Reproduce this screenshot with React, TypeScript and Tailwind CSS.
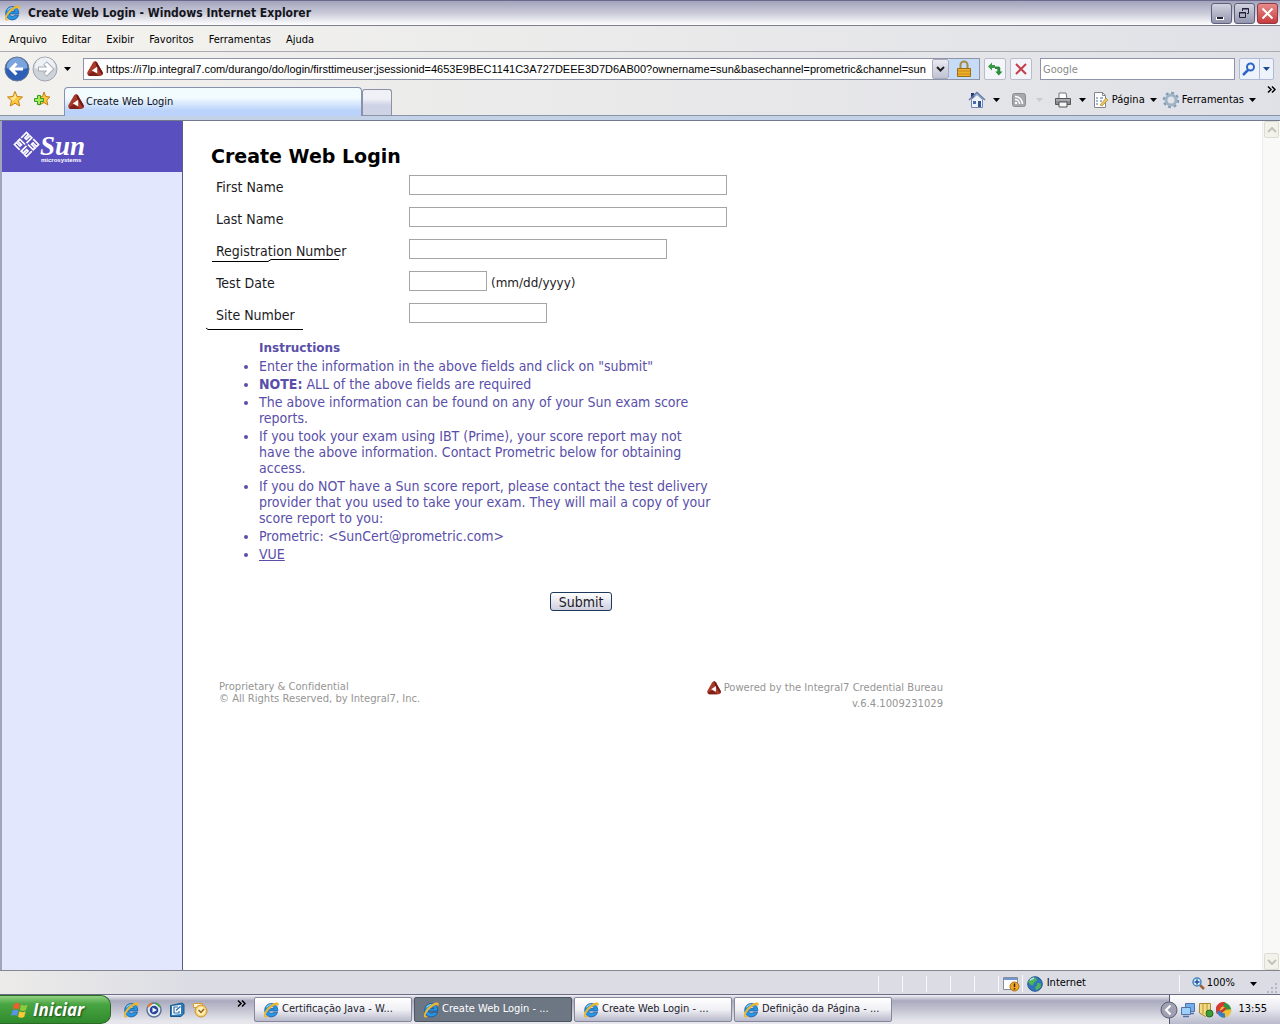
import { useState } from "react";

const ui = "font-['DejaVu_Sans_Condensed','DejaVu_Sans',sans-serif]";
const page = "font-['DejaVu_Sans',sans-serif]";
const pageText = "font-['DejaVu_Sans_Condensed','DejaVu_Sans',sans-serif] text-[14px]";

function IeIcon({ className = "h-4 w-4" }: { className?: string }) {
  return (
    <svg viewBox="0 0 16 16" className={`shrink-0 ${className}`} aria-hidden="true">
      <path d="M8.500 1.500c3.900 0 6.300 2.800 6.300 7.500H5.600c.2 1.500 1.300 2.200 2.900 2.200 1.200 0 2-.4 2.400-1h3.600c-.9 2.900-3.200 4.700-6.200 4.700-3.900 0-6.600-2.800-6.600-6.600 0-4 2.900-6.800 6.800-6.800zM5.700 6.600h5.300c-.2-1.300-1.200-2-2.600-2s-2.400.7-2.700 2z" fill="#2795e0" stroke="#0d4c98" strokeWidth=".7" />
      <path d="M3.500 5.200Q5 2.800 8 2.500" fill="none" stroke="#8fd4fa" strokeWidth="1.200" />
      <path d="M2 15.500c-2.700-1.200 0-7.500 4.300-11.200C10 1.200 14.700-.8 15.600 1.600c.3 1-.1 2.200-.8 3.400.1-2.200-1-2.700-3.500-1.400C7 6 2.400 11.200 2.700 13.600c.1 1 1.200.9 2.600.2-1.100 1.200-2.400 2.100-3.300 1.700z" fill="#efb72e" />
    </svg>
  );
}

function Integral7Icon({ className = "h-4 w-4" }: { className?: string }) {
  return (
    <svg viewBox="0 0 16 16" className={`shrink-0 ${className}`} aria-hidden="true">
      <path d="M6 1.500Q8-.8 10 1.500L15.500 11q1 3.200-2 4H2.500q-3-.8-2-4z" fill="#a83a2a" />
      <path d="M8 .3q1.300.2 2 1.200L15.500 11q.7 2-.3 3L9.300 5z" fill="#701914" />
      <path d="M1 13.500l5-3 6 4.500H2.500q-1.200-.4-1.500-1.500z" fill="#7f2119" />
      <path d="M10.200 5.800v6.400L4.800 9.500z" fill="#fff" />
    </svg>
  );
}

function Caret({ className = "text-black" }: { className?: string }) {
  return (
    <svg viewBox="0 0 7 4" className={`h-1 w-[7px] shrink-0 ${className}`} aria-hidden="true">
      <path d="M0 0h7L3.500 4z" fill="currentColor" />
    </svg>
  );
}

function Chevrons() {
  return <svg viewBox="0 0 9 7" className="h-[7px] w-[9px]" fill="none" stroke="#000" strokeWidth="1.500"><path d="M1 .5l3 3-3 3M5 .5l3 3-3 3" /></svg>;
}

function TitleBar() {
  const btn = "flex h-[21px] w-[21px] items-center justify-center rounded-[3px] border border-[#5d5f7c] bg-linear-to-b from-[#d3d4e0] to-[#9496ae]";
  return (
    <header className="flex h-[26px] items-center gap-2 border-y border-t-[#6c6a8c] border-b-[#7d7e90] bg-linear-to-b from-[#a3a4bc] via-[#c9cad8] to-white pl-1 pr-[2px]">
      <IeIcon />
      <h1 className="flex-1 text-[12px] font-bold text-[#15151c]">Create Web Login - Windows Internet Explorer</h1>
      <div className="flex gap-[2px]">
        <button aria-label="Minimizar" className={btn}>
          <svg viewBox="0 0 19 19" className="h-[19px] w-[19px]"><path d="M4 13h8v3H4z" fill="#fff" /><path d="M5 13h6v2H5z" fill="#20223c" /></svg>
        </button>
        <button aria-label="Restaurar" className={btn}>
          <svg viewBox="0 0 19 19" className="h-[19px] w-[19px]" fill="none" stroke="#20223c"><path d="M7.500 7V4.500h6v5H12M7 5h7M4.500 8.500h6v5h-6zM4 9h7" /></svg>
        </button>
        <button aria-label="Fechar" className="flex h-[21px] w-[21px] items-center justify-center rounded-[3px] border border-[#8c3a48] bg-linear-to-b from-[#e58a88] to-[#c8393c]">
          <svg viewBox="0 0 19 19" className="h-[19px] w-[19px]" stroke="#fff" strokeWidth="2"><path d="M4.500 4.500l10 10M14.500 4.500l-10 10" /></svg>
        </button>
      </div>
    </header>
  );
}

function AddressBar() {
  const square = "flex h-[22px] w-[22px] items-center justify-center rounded-[2px] border border-[#b9bdca] bg-[#f3f5fa]";
  return (
    <div className="flex h-[34px] items-center pl-1 pr-[6px]">
      <div className="flex items-center">
        <button aria-label="Voltar">
          <svg viewBox="0 0 26 26" className="h-[26px] w-[26px]">
            <circle cx="13" cy="13" r="12" fill="#2d5fb4" stroke="#6d7a92" />
            <path d="M2.500 12a10.500 10.500 0 0 1 21 0q-10 4-21 0z" fill="#7ba3dc" />
            <path d="M7 13h12M12.500 7.500L7 13l5.500 5.500" fill="none" stroke="#fff" strokeWidth="3" />
          </svg>
        </button>
        <button aria-label="Avançar" className="ml-[2px]">
          <svg viewBox="0 0 26 26" className="h-[26px] w-[26px]">
            <circle cx="13" cy="13" r="12" fill="#cdd3d9" stroke="#9ea5ae" />
            <path d="M2.500 12a10.500 10.500 0 0 1 21 0q-10 4-21 0z" fill="#eef1f3" />
            <path d="M6 13h13M13 7l6 6-6 6" fill="none" stroke="#a4adb7" strokeWidth="5" />
            <path d="M7 13h12M13.500 7.500L19 13l-5.500 5.500" fill="none" stroke="#fff" strokeWidth="3" />
          </svg>
        </button>
        <button aria-label="Páginas recentes" className="px-[6px]"><Caret /></button>
      </div>
      <div className="ml-[6px] flex h-[22px] min-w-0 flex-1 items-center border border-[#8d93a8] bg-white pl-[3px]">
        <Integral7Icon />
        <input
          aria-label="Endereço"
          defaultValue="https://i7lp.integral7.com/durango/do/login/firsttimeuser;jsessionid=4653E9BEC1141C3A727DEEE3D7D6AB00?ownername=sun&basechannel=prometric&channel=sun"
          className="ml-[3px] min-w-0 flex-1 font-['Liberation_Sans',sans-serif] text-[11px] text-black outline-none"
        />
        <button aria-label="Mostrar endereços" className="flex h-5 w-[17px] items-center justify-center rounded-[2px] border border-[#a9abbd] bg-linear-to-b from-[#e9eaf1] to-[#c0c2d2]">
          <svg viewBox="0 0 9 6" className="h-[6px] w-[9px]" fill="none" stroke="#222" strokeWidth="2"><path d="M1 1l3.500 3.500L8 1" /></svg>
        </button>
        <button aria-label="Relatório de segurança" className="flex h-5 w-[30px] items-center justify-center bg-[#c6dbf6]">
          <svg viewBox="0 0 16 18" className="h-[18px] w-4">
            <path d="M4.500 9V5a3.500 3.500 0 0 1 7 0v4" fill="none" stroke="#a58b46" strokeWidth="2" />
            <path d="M1.500 8.500h13v8h-13z" fill="#eeb12e" stroke="#9c6d12" />
            <path d="M2 11h12M2 14h12" stroke="#c9871a" />
          </svg>
        </button>
      </div>
      <div className="ml-1 flex gap-1">
        <button aria-label="Atualizar" className={square}>
          <svg viewBox="0 0 16 16" className="h-4 w-4">
            <path d="M1 5.500L5 1.500v2.500h3V7H5v2.500z" fill="#379a45" />
            <path d="M15.500 10.500l-3.700 4-3.500-4h2V8H8V5.500h3.500q1.800 0 1.800 1.800v3.200z" fill="#2c8c3c" />
          </svg>
        </button>
        <button aria-label="Parar" className={square}>
          <svg viewBox="0 0 16 16" className="h-4 w-4" stroke="#c3404b" strokeWidth="2"><path d="M3 3l10 10M13 3L3 13" /></svg>
        </button>
      </div>
      <input aria-label="Pesquisar" placeholder="Google" className="ml-2 h-[22px] w-[195px] border border-[#8d93a8] bg-white px-[2px] text-[11px] outline-none placeholder:text-[#8b8b8b]" />
      <div className="ml-1 flex h-[22px] rounded-[2px] border border-[#b0bad2] bg-[#eef3fb]">
        <button aria-label="Ir" className="w-5 border-r border-[#b0bad2] pl-[2px]">
          <svg viewBox="0 0 14 14" className="h-[14px] w-[14px]" fill="none"><circle cx="8.500" cy="5" r="3.500" stroke="#2e66c8" strokeWidth="2" /><path d="M6 8l-5 5" stroke="#2e66c8" strokeWidth="2.500" /></svg>
        </button>
        <button aria-label="Opções de pesquisa" className="px-[3px]"><Caret className="text-[#1e4b94]" /></button>
      </div>
    </div>
  );
}

function TabRow() {
  return (
    <div className="flex h-[30px] items-start border-b border-[#8b93a5] px-1">
      <button aria-label="Favoritos" className="mt-1 ml-[2px]">
        <svg viewBox="0 0 18 18" className="h-[18px] w-[18px]"><path d="M9 1.500l2.200 5 5.300.5-4 3.600 1.200 5.400L9 13.200 4.300 16l1.200-5.400-4-3.600 5.300-.5z" fill="#ffc53b" stroke="#c2811c" /><path d="M9 3.500l1.500 4L7 11 4 8l3.500-.8z" fill="#ffe894" /></svg>
      </button>
      <button aria-label="Adicionar a favoritos" className="mt-1 ml-[9px]">
        <svg viewBox="0 0 18 18" className="h-[18px] w-[18px]"><path d="M11 2l1.700 4.500 4.300.5-3.200 3 1 5L11 12.500 6 15l1.500-5L5 7l4.500-.5z" fill="#ffc53b" stroke="#c2811c" /><path d="M4.500 5.500h3v3h3v3h-3v3h-3v-3h-3v-3h3z" fill="#a8e85c" stroke="#2f9c24" /></svg>
      </button>
      <div className="ml-[13px] flex flex-1 items-end self-stretch" role="tablist">
        <button role="tab" aria-selected="true" className="-mb-px flex h-[29px] w-[298px] items-center gap-[2px] rounded-t-[4px] border border-b-0 border-[#8791ad] bg-linear-to-b from-[#f2fbfe] from-35% to-[#bbd3fb] to-80% pl-[3px] text-[11px] text-[#101020]">
          <Integral7Icon />
          Create Web Login
        </button>
        <button role="tab" aria-selected="false" aria-label="Nova guia" className="h-[26px] w-[30px] rounded-t-[3px] border border-b-0 border-[#8e91a6] bg-linear-to-b from-[#f0f1f7] from-35% to-[#cfd3e6] to-60%" />
      </div>
      <div className="flex h-7 items-center text-[11px] text-black">
        <button aria-label="Página inicial" className="flex items-center gap-[7px]">
          <svg viewBox="0 0 18 18" className="h-[18px] w-[18px]"><path d="M3 2h3v5H3z" fill="#243a7e" /><path d="M3.500 8.500L9 3.500l5.500 5v8h-11z" fill="#edf2fa" stroke="#7886ab" /><path d="M1 9l8-7.500L17 9" fill="none" stroke="#6078a8" strokeWidth="1.500" /><path d="M10 10h3v6h-3z" fill="#2e5a9a" /><path d="M5 10h3v3H5z" fill="#4a6aa8" /></svg>
          <Caret />
        </button>
        <button aria-label="Feeds" className="ml-3 flex items-center gap-[10px]">
          <svg viewBox="0 0 14 14" className="h-[14px] w-[14px]"><rect x=".5" y=".5" width="13" height="13" rx="2" fill="#a6a8ab" stroke="#8b8d90" /><path d="M3 6.500a4.500 4.500 0 0 1 4.500 4.500M3 3.500a7.500 7.500 0 0 1 7.500 7.500" fill="none" stroke="#fff" strokeWidth="1.500" /><circle cx="4" cy="10" r="1.200" fill="#fff" /></svg>
          <Caret className="text-[#c9cbd2]" />
        </button>
        <button aria-label="Imprimir" className="ml-[11px] flex items-center gap-[7px]">
          <svg viewBox="0 0 18 18" className="h-[18px] w-[18px]"><path d="M5 2h7l1 6H5z" fill="#fff" stroke="#777" /><path d="M1.500 7.500h15v6h-15z" fill="#8a8b8e" stroke="#56575a" /><path d="M2 9h14" stroke="#c9cacc" /><path d="M5 11h8v5H5z" fill="#f6f6f6" stroke="#555" /></svg>
          <Caret />
        </button>
        <button className="ml-[6px] flex items-center gap-[2px]">
          <svg viewBox="0 0 18 18" className="h-[18px] w-[18px]"><path d="M2.500 1.500h8l3 3v12h-11z" fill="#fff" stroke="#84868c" /><path d="M10.500 1.500v3h3" fill="none" stroke="#84868c" /><path d="M4 7h2M8 7h3M4 10h2M8 10h2M4 13h2" stroke="#48699a" /><path d="M8 14l6-7 2 2-6 6z" fill="#ecc65a" stroke="#a17f2b" strokeWidth=".6" /></svg>
          <span className="mr-[3px]">Página</span>
          <Caret />
        </button>
        <button className="ml-[5px] flex items-center gap-[2px]">
          <svg viewBox="0 0 18 18" className="h-[18px] w-[18px]" fill="none"><circle cx="9" cy="9" r="7" stroke="#8399ae" strokeWidth="2.500" strokeDasharray="2.750 2.750" /><circle cx="9" cy="9" r="5" stroke="#9eb3c6" strokeWidth="3" /></svg>
          <span className="mr-[3px]">Ferramentas</span>
          <Caret />
        </button>
      </div>
      <button aria-label="Mais ferramentas" className="ml-[11px]">
        <Chevrons />
      </button>
    </div>
  );
}

function SunLogo() {
  return (
    <svg viewBox="0 0 72 34" className="h-[34px] w-[72px]" role="img" aria-label="Sun microsystems">
      <g transform="translate(13.500 14.500) rotate(45)" fill="none" stroke="#fff" strokeWidth="1.700">
        <path d="M-8.500-1v-7.500h2.800v5h2v-5h2.700V-1M1-8.500h7.500v2.800h-5v2h5V-1H1M8.500 1v7.500H5.700v-5h-2v5H1V1M-1 8.500h-7.500V5.700h5v-2h-5V1H-1" />
      </g>
      <text x="27" y="25" fill="#fff" fontFamily="Liberation Serif, serif" fontStyle="italic" fontWeight="bold" fontSize="27">Sun</text>
      <text x="28" y="32" fill="#fff" fontFamily="Liberation Sans, sans-serif" fontWeight="bold" fontSize="6">microsystems</text>
    </svg>
  );
}

const fields = [
  { id: "firstName", label: "First Name", width: "w-[318px]" },
  { id: "lastName", label: "Last Name", width: "w-[318px]" },
  { id: "registration", label: "Registration Number", width: "w-[258px]" },
  { id: "testDate", label: "Test Date", width: "w-[78px]", hint: "(mm/dd/yyyy)" },
  { id: "siteNumber", label: "Site Number", width: "w-[138px]" },
];

function LoginForm() {
  const [values, setValues] = useState<Record<string, string>>({});

  return (
    <form onSubmit={e => e.preventDefault()} className={`w-[520px] ${pageText}`}>
      {fields.map(f => (
        <div key={f.id} className="flex h-8 items-start leading-5">
          <div className="relative w-[198px] shrink-0 pl-[5px] pt-[2px]">
            <label htmlFor={f.id}>{f.label}</label>
            {f.id === "registration" && (
              <svg viewBox="0 0 130 4" className="absolute top-5 left-0 h-1 w-[130px]" fill="none" stroke="#000"><path d="M1 2.500h56l3-2h68" /></svg>
            )}
            {f.id === "siteNumber" && (
              <svg viewBox="0 0 98 4" className="absolute top-6 -left-[5px] h-1 w-[98px]" fill="none" stroke="#000"><path d="M0 1l2 1.500h95" /></svg>
            )}
          </div>
          <input
            id={f.id}
            value={values[f.id] ?? ""}
            onChange={e => setValues({ ...values, [f.id]: e.target.value })}
            className={`h-5 shrink-0 border border-[#a5a5a8] bg-white px-1 outline-none ${f.width}`}
          />
          {f.hint && <span className="ml-1 pt-[2px] font-['DejaVu_Sans',sans-serif] text-[12px]">{f.hint}</span>}
        </div>
      ))}

      <div className="pl-12 pt-[5px] leading-4 text-[#594fa9]">
        <h3 className="font-['DejaVu_Sans',sans-serif] text-[12px] leading-4 font-bold">Instructions</h3>
        <ul className="mt-[2px] list-disc space-y-[2px]">
          <li>Enter the information in the above fields and click on "submit"</li>
          <li><b>NOTE:</b> ALL of the above fields are required</li>
          <li>The above information can be found on any of your Sun exam score<br />reports.</li>
          <li>If you took your exam using IBT (Prime), your score report may not<br />have the above information. Contact Prometric below for obtaining<br />access.</li>
          <li>If you do NOT have a Sun score report, please contact the test delivery<br />provider that you used to take your exam. They will mail a copy of your<br />score report to you:</li>
          <li>Prometric: &lt;SunCert@prometric.com&gt;</li>
          <li><a href="#vue" className="underline">VUE</a></li>
        </ul>
      </div>

      <button type="submit" className="mt-[30px] ml-[339px] block h-[19px] w-[62px] rounded-[3px] border border-[#1c3a5c] bg-linear-to-b from-white to-[#cfcfe0] leading-4">
        Submit
      </button>
    </form>
  );
}

function Scrollbar() {
  return (
    <div className="flex w-[18px] flex-col items-center justify-between border-l border-[#ececf0] bg-[#f9f9f8]">
      {["M1 5l4-4 4 4", "M1 1l4 4 4-4"].map(d => (
        <div key={d} className="flex h-[17px] w-[15px] items-center justify-center rounded-[2px] border border-[#dddcd2] bg-[#f2f1ea]">
          <svg viewBox="0 0 10 6" className="h-[6px] w-[10px]" fill="none" stroke="#c4c3ba" strokeWidth="2"><path d={d} /></svg>
        </div>
      ))}
    </div>
  );
}

function StatusBar() {
  return (
    <div className="flex h-6 items-center border-t border-[#85858f] bg-linear-to-r from-[#ecebe9] to-[#dcdde4] to-15% pt-[2px] pr-[2px] text-[11px] text-black">
      <div className="flex flex-1 justify-end">
        {[0, 1, 2, 3, 4, 5].map(i => <div key={i} className="h-4 w-6 border-l border-[#f9f9fb]" />)}
      </div>
      <svg viewBox="0 0 18 16" className="-ml-5 h-4 w-[18px]"><path d="M1.500 1.500h14v12h-14z" fill="#fff" stroke="#888c98" /><path d="M2 3h13" stroke="#6f97d4" strokeWidth="2" /><circle cx="12.500" cy="10.500" r="4.500" fill="#eea827" stroke="#ad6d0e" /><path d="M12.500 7.500v3.500M12.500 12v1.500" stroke="#402500" strokeWidth="1.500" /></svg>
      <div className="ml-[2px] flex w-[157px] items-center gap-1 border-l border-[#f9f9fb] pl-1">
        <svg viewBox="0 0 16 16" className="h-4 w-4"><circle cx="8" cy="8" r="7.300" fill="#2e74bd" stroke="#23588f" /><path d="M4 2l5-.5 1 3-3 2-1 3-3-1-2-3zM10 7l4 .5-.5 4-4 3-1.500-3 2-2z" fill="#51b359" /><path d="M3 4l4-2" stroke="#b5dcf4" strokeWidth="1.500" /></svg>
        Internet
      </div>
      <button className="flex items-center gap-[2px] border-l border-[#f9f9fb] pl-3">
        <svg viewBox="0 0 13 13" className="h-[13px] w-[13px]" fill="none"><path d="M8 8l4 4" stroke="#9c623a" strokeWidth="2.500" /><circle cx="5" cy="5" r="4" fill="#d8eeff" stroke="#4386bc" strokeWidth="1.500" /><path d="M5 2.500v5M2.500 5h5" stroke="#1e4f9b" strokeWidth="1.500" /></svg>
        <span className="mr-[13px]">100%</span>
        <Caret />
      </button>
      <svg viewBox="0 0 12 12" className="mt-2 ml-[9px] h-3 w-3" fill="#b5b6c0"><path d="M9 1h2v2H9zM5 5h2v2H5zM9 5h2v2H9zM1 9h2v2H1zM5 9h2v2H5zM9 9h2v2H9z" /></svg>
    </div>
  );
}

const tasks = [
  { title: "Certificação Java - W...", active: false },
  { title: "Create Web Login - ...", active: true },
  { title: "Create Web Login - ...", active: false },
  { title: "Definição da Página - ...", active: false },
];

function Taskbar() {
  return (
    <footer className="flex h-[30px] items-stretch border-t border-[#6c6d85] bg-linear-to-b from-[#f2f2f7] via-[#a9aabd] via-20% to-[#e6e6ec] to-90% text-[11px]">
      <button className="flex w-[111px] items-center gap-1 rounded-r-[10px] border border-l-0 border-[#2a6a24] bg-linear-to-b from-[#8fd182] via-[#4aa543] via-30% to-[#2f8a2c] pl-[11px] font-['Open_Sans',sans-serif] text-[17px] leading-6 font-bold text-white italic [text-shadow:1px_1px_2px_#1b4a18]">
        <svg viewBox="0 0 18 18" className="h-[18px] w-[18px]"><path d="M3 3q3-2 6 0L7.700 8.500q-3-2-6 0z" fill="#e9602c" /><path d="M10 3.500q3 2 6.500 0L15 9q-3 2-6.200 0z" fill="#8ccb3e" /><path d="M1.400 9.700q3-2 6 0L6 15q-3-2-6 0z" fill="#5b93e8" /><path d="M8.400 10.200q3 2 6.300 0l-1.400 5.500q-3 2-6.300 0z" fill="#fbc934" /></svg>
        Iniciar
      </button>
      <nav aria-label="Início rápido" className="flex w-[143px] items-center gap-[7px] pl-3">
        <button aria-label="Internet Explorer"><IeIcon /></button>
        <button aria-label="Media Player">
          <svg viewBox="0 0 16 16" className="h-4 w-4"><circle cx="8" cy="8" r="7" fill="#e5edf5" stroke="#5d7498" strokeWidth="1.500" /><path d="M2 5a7 7 0 0 1 4-3.500" fill="none" stroke="#e07b2b" strokeWidth="2" /><path d="M10 1.500A7 7 0 0 1 14 5" fill="none" stroke="#4ca64a" strokeWidth="2" /><circle cx="8" cy="8" r="4.300" fill="#28459c" /><path d="M6.500 5.500L11 8l-4.500 2.500z" fill="#fff" /></svg>
        </button>
        <button aria-label="Mostrar área de trabalho">
          <svg viewBox="0 0 16 16" className="h-4 w-4"><path d="M1.500 3.500L13 1l2 1.500v9l-3 3H1.500z" fill="#2b7cba" stroke="#1d578a" /><path d="M3 4l9-1v9l-9 1z" fill="#fff" /><path d="M9 5H5v6h5V9M7 8.500l4.500-4" fill="none" stroke="#2b6cb0" strokeWidth="1.200" /></svg>
        </button>
        <button aria-label="Outlook">
          <svg viewBox="0 0 16 16" className="h-4 w-4"><path d="M1.500 1.500h9v4h-9z" fill="#fff8dc" stroke="#d69a32" /><circle cx="9" cy="9" r="6" fill="#f5cd6d" stroke="#cf9230" /><circle cx="9" cy="9" r="4.300" fill="#fff0bd" /><path d="M6.500 8L9 10.500 12 7" fill="none" stroke="#8d6220" strokeWidth="1.500" /></svg>
        </button>
        <button aria-label="Mais atalhos" className="mb-3 ml-[22px]"><Chevrons /></button>
      </nav>
      <div className="flex flex-1 items-center gap-[2px]">
        {tasks.map((t, i) => (
          <button
            key={i}
            className={`flex h-[25px] w-[158px] items-center gap-[3px] rounded-[2px] border pl-2 ${
              t.active ? "border-[#4e5563] bg-[#6d7784] text-white" : "border-[#85879b] bg-linear-to-b from-white via-[#f0f0f5] to-[#b9bacb] text-[#22222c]"
            }`}
          >
            <IeIcon />
            {t.title}
          </button>
        ))}
      </div>
      <div className="flex items-center border-l border-[#55566c] bg-linear-to-b from-white via-[#e6e6ee] to-[#b9bacb] pr-[13px] text-black">
        <button aria-label="Mostrar ícones ocultos" className="-ml-[10px]">
          <svg viewBox="0 0 18 18" className="h-[18px] w-[18px]" fill="none"><circle cx="9" cy="9" r="8" fill="#9fa1b3" stroke="#5c5e74" /><path d="M10.500 4.500L6 9l4.500 4.500" stroke="#fff" strokeWidth="2" /></svg>
        </button>
        <div className="ml-[2px] flex items-center gap-[2px]">
          <svg viewBox="0 0 16 16" className="h-4 w-4"><path d="M5.500 1.500h9v8h-9z" fill="#6fb1ef" stroke="#5272a8" /><path d="M1.500 5.500h9v7h-9z" fill="#9dd0fb" stroke="#5272a8" /><path d="M3 14.500h6M11 11.500h3" stroke="#5272a8" strokeWidth="1.500" /></svg>
          <svg viewBox="0 0 16 16" className="h-4 w-4"><path d="M1.500 1.500h11V10l-5 4.500-6-3.500z" fill="#f4dc83" stroke="#a98a34" /><path d="M5 2v10M9 2v8" stroke="#b69438" /><circle cx="11.500" cy="11.500" r="3.500" fill="#3b9e38" stroke="#22681f" /></svg>
          <svg viewBox="0 0 16 16" className="h-4 w-4" fill="none" strokeWidth="4.500"><circle cx="8" cy="8" r="5" fill="#eec137" stroke="none" /><path d="M3 11A5.500 5.500 0 0 1 9 2.500" stroke="#d33c30" /><path d="M8 3a5.500 5.500 0 0 1 5 6" stroke="#2f9345" /><path d="M13 7.500A5.500 5.500 0 0 1 7 13.500" stroke="#eec137" /><path d="M9 13.500A5.500 5.500 0 0 1 3 9" stroke="#397ec2" /><path d="M5 10l5-4" stroke="#c8382c" strokeWidth="2.500" /></svg>
        </div>
        <time className="ml-[6px]">13:55</time>
      </div>
    </footer>
  );
}

export default function App() {
  return (
    <div className={`flex min-h-screen flex-col bg-[#dfe0e6] ${ui}`}>
      <TitleBar />
      <nav className="flex h-[26px] items-center gap-[15px] border-b border-[#aaaab0] bg-linear-to-r from-[#f4f3ee] to-[#e0e1e7] pt-1 pl-[9px] text-[11px] text-black">
        {["Arquivo", "Editar", "Exibir", "Favoritos", "Ferramentas", "Ajuda"].map(item => <button key={item}>{item}</button>)}
      </nav>
      <div className="border-b border-[#71798d] bg-linear-to-r from-[#f2f1ed] to-[#e0e1e7]">
        <AddressBar />
        <TabRow />
        <div className="h-1 bg-[#c3d2e6]" />
      </div>

      <div className={`flex flex-1 items-stretch border-l-2 border-[#a3a3bb] bg-white ${page} [font-variant-ligatures:none]`}>
        <aside className="w-[181px] border-r border-[#5d5c83] bg-[#e3e7fd]">
          <div className="h-[51px] bg-[#594fbf] pt-[9px] pl-[11px]"><SunLogo /></div>
        </aside>
        <main className="flex-1 pt-[23px] pl-7 text-[#1b1b24]">
          <h2 className="mb-[6px] text-[19px] leading-[25px] font-bold text-black">Create Web Login</h2>
          <LoginForm />
          <div className="mt-[70px] flex w-[732px] justify-between pl-2 text-[10px] leading-3 text-[#959595]">
            <p>Proprietary &amp; Confidential<br />© All Rights Reserved, by Integral7, Inc.</p>
            <div className="text-right">
              <p className="flex items-center gap-[3px]"><Integral7Icon className="h-[14px] w-[14px]" />Powered by the Integral7 Credential Bureau</p>
              <p className="mt-[3px]">v.6.4.1009231029</p>
            </div>
          </div>
        </main>
        <Scrollbar />
      </div>

      <StatusBar />
      <Taskbar />
    </div>
  );
}
